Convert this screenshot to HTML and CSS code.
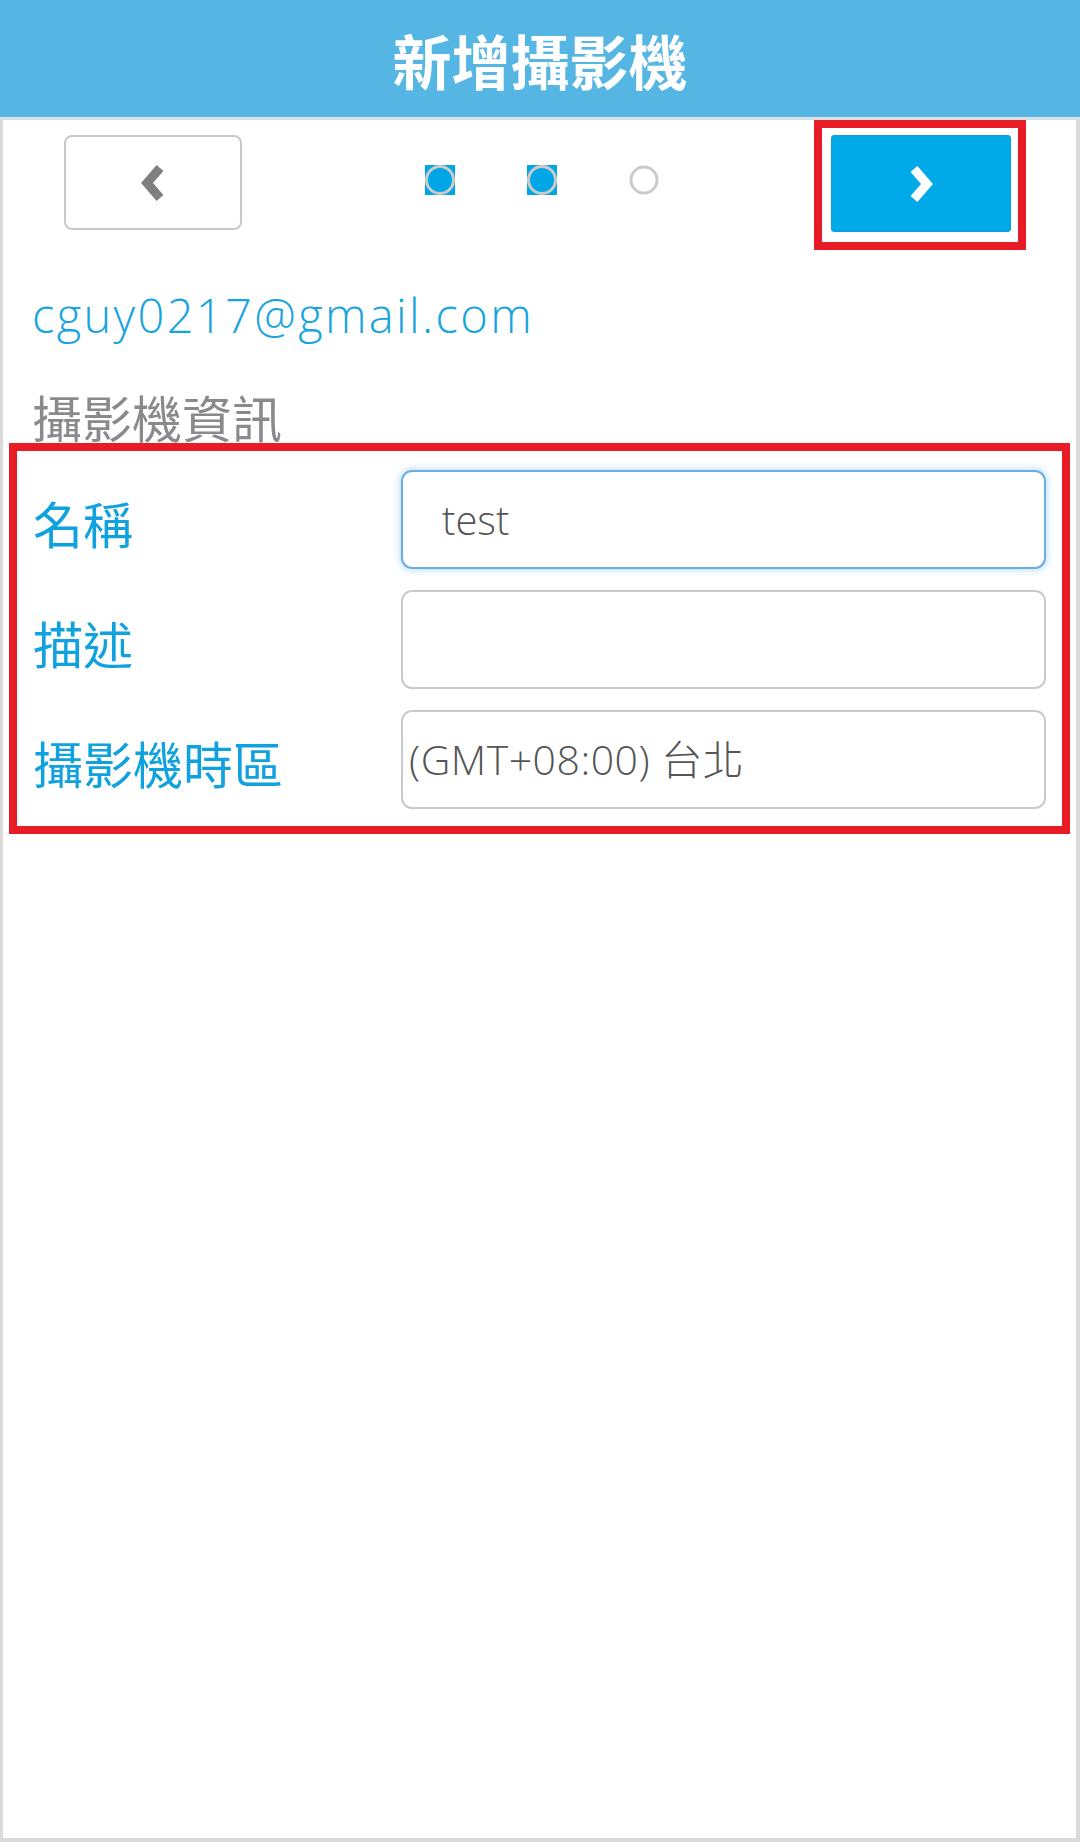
FILE: index.html
```html
<!DOCTYPE html>
<html lang="zh-Hant">
<head>
<meta charset="utf-8">
<title>新增攝影機</title>
<link rel="stylesheet" href="styles.css">
</head>
<body>
<header class="topbar"><h1 class="title">新增攝影機</h1></header>
<main class="page">
  <div class="nav">
    <button class="btn-prev" type="button" aria-label="上一步">
      <svg width="26" height="38" viewBox="0 0 26 38"><polyline points="20,4 7,19 20,34" fill="none" stroke="#7f7f7f" stroke-width="9" stroke-linejoin="miter"/></svg>
    </button>
    <div class="dots">
      <svg class="dot" width="30" height="30" viewBox="0 0 30 30"><rect x="0" y="0" width="30" height="30" fill="#00a6e6"/><circle cx="15" cy="15" r="13.5" fill="none" stroke="#cbcbcb" stroke-width="3"/></svg>
      <svg class="dot" width="30" height="30" viewBox="0 0 30 30"><rect x="0" y="0" width="30" height="30" fill="#00a6e6"/><circle cx="15" cy="15" r="13.5" fill="none" stroke="#cbcbcb" stroke-width="3"/></svg>
      <svg class="dot" width="30" height="30" viewBox="0 0 30 30"><circle cx="15" cy="15" r="13" fill="none" stroke="#cbcbcb" stroke-width="3"/></svg>
    </div>
    <div class="highlight-next">
      <button class="btn-next" type="button" aria-label="下一步">
        <svg width="26" height="38" viewBox="0 0 26 38"><polyline points="6,4 19,19 6,34" fill="none" stroke="#ffffff" stroke-width="9" stroke-linejoin="miter"/></svg>
      </button>
    </div>
  </div>
  <div class="account">cguy0217@gmail.com</div>
  <div class="section-title">攝影機資訊</div>
  <div class="form-box">
    <div class="row">
      <label class="label">名稱</label>
      <div class="field field-focus"><span class="value value-name">test</span></div>
    </div>
    <div class="row">
      <label class="label">描述</label>
      <div class="field"></div>
    </div>
    <div class="row">
      <label class="label">攝影機時區</label>
      <div class="field"><span class="value value-tz">(GMT+08:00) 台北</span></div>
    </div>
  </div>
</main>
</body>
</html>
```

FILE: styles.css
```css
html, body {
  margin: 0;
  padding: 0;
}
body {
  width: 1080px;
  height: 1842px;
  background: #dadada;
  display: flex;
  flex-direction: column;
  font-family: "Open Sans", "Noto Sans CJK TC", sans-serif;
  box-sizing: border-box;
}
.topbar {
  height: 117px;
  background: #55b5e3;
  border-bottom: 3px solid #d9e1e7;
  display: flex;
  align-items: center;
  justify-content: center;
  flex: none;
}
.title {
  margin: 0;
  color: #ffffff;
  font-family: "Noto Sans CJK TC", sans-serif;
  font-weight: 700;
  font-size: 59px;
  line-height: 1;
  padding-top: 2px;
}
.page {
  flex: 1;
  margin: 0 4px 4px 3px;
  background: #ffffff;
}
.nav {
  display: flex;
  align-items: flex-start;
  padding: 0 0 0 61px;
}
.btn-prev {
  width: 178px;
  height: 95px;
  margin-top: 15px;
  background: #ffffff;
  border: 2px solid #c9c9c9;
  border-radius: 8px;
  display: flex;
  align-items: center;
  justify-content: center;
  padding: 0;
}
.dots {
  display: flex;
  gap: 72px;
  margin: 45px 0 0 183px;
}
.dot {
  display: block;
  flex: none;
}
.highlight-next {
  margin-left: auto;
  margin-right: 50px;
  border: 8px solid #e81c24;
  padding: 7px 7px 10px 9px;
}
.btn-next {
  width: 180px;
  height: 97px;
  background: #00aae9;
  border: 1px solid #0aa0dc;
  border-radius: 3px;
  display: flex;
  align-items: center;
  justify-content: center;
  padding: 0;
}
.account {
  padding-left: 29px;
  margin-top: 35px;
  color: #18a4de;
  font-size: 47px;
  font-weight: 300;
  line-height: 60px;
  letter-spacing: 2.35px;
}
.section-title {
  padding-left: 29px;
  margin-top: 45px;
  color: #8a8a8a;
  font-family: "Noto Sans CJK TC", sans-serif;
  font-size: 50px;
  line-height: 53px;
}
.form-box {
  margin: 0 6px 0 6px;
  border: 8px solid #e81c24;
  padding: 19px 16px 17px 16px;
  display: flex;
  flex-direction: column;
  gap: 21px;
}
.row {
  display: flex;
  align-items: center;
}
.label {
  width: 368px;
  flex: none;
  color: #0fa2de;
  font-family: "Noto Sans CJK TC", sans-serif;
  font-size: 50px;
  line-height: 60px;
  margin-top: 5px;
}
.field {
  flex: 1;
  height: 99px;
  box-sizing: border-box;
  border: 2px solid #cacaca;
  border-radius: 11px;
  display: flex;
  align-items: center;
  background: #ffffff;
}
.field-focus {
  border-color: #69aee4;
  box-shadow: 0 0 9px rgba(102, 175, 233, 0.55);
}
.value {
  color: #555555;
  font-size: 40px;
  font-weight: 300;
  line-height: 1;
}
.value-name {
  padding-left: 39px;
}
.value-tz {
  padding-left: 6px;
  font-size: 41px;
  letter-spacing: 0.5px;
}
```
